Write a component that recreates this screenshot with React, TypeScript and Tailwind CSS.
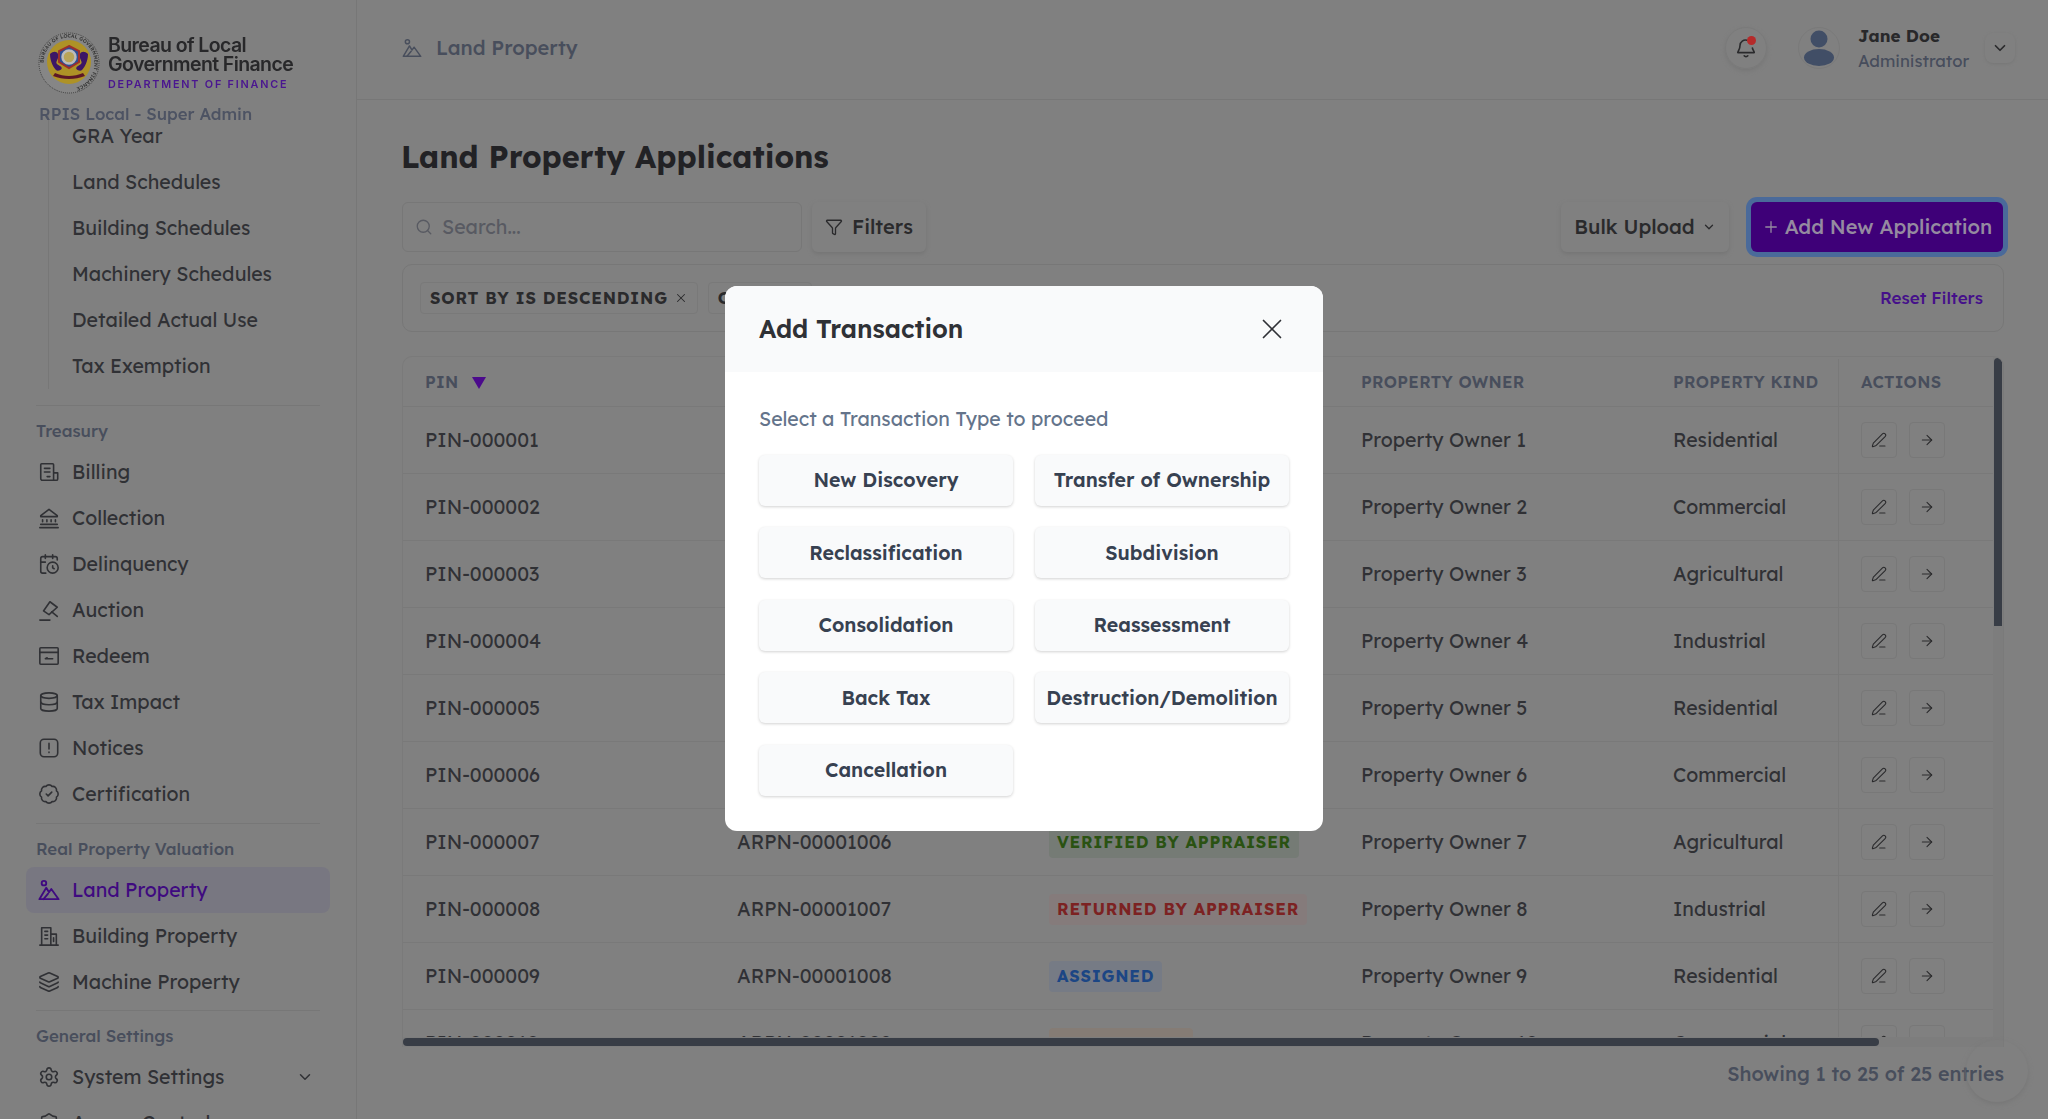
import React from 'react';
import { ArrowRight, CalendarClock, ChevronDown, Database, Filter, Layers, PenLine, Plus, Search, Settings, X, BadgeCheck, ShieldCheck } from 'lucide-react';

type IconProps = { size?: number; strokeWidth?: number; className?: string };

function Svg({ size = 22, strokeWidth = 1.75, className = '', children }: IconProps & { children: React.ReactNode }) {
  return (
    <svg width={size} height={size} viewBox="0 0 24 24" fill="none" stroke="currentColor" strokeWidth={strokeWidth} strokeLinecap="round" strokeLinejoin="round" className={`shrink-0 ${className}`}>
      {children}
    </svg>
  );
}

const BillingIcon = (p: IconProps) => (
  <Svg {...p}>
    <path d="M17 21H4a2 2 0 0 1-1-2V4a1 1 0 0 1 1-1h12a1 1 0 0 1 1 1v17h3a1.5 1.5 0 0 0 1.5-1.5V13H17" />
    <path d="M7 8h6M7 12h6M10 17h3" />
  </Svg>
);
const CollectionIcon = (p: IconProps) => (
  <Svg {...p}>
    <path d="M2 22.5h20M3 19h18" />
    <path d="M3 9.5 12 2.5l9 7v1H3Z" />
    <path d="M5 14v2M9.7 14v2M14.3 14v2M19 14v2" />
  </Svg>
);
const AuctionIcon = (p: IconProps) => (
  <Svg {...p}>
    <path d="M2 23h11" />
    <path d="m6 13 7-10 8 6-9 8Z" />
    <path d="m15 14 6 5" />
  </Svg>
);
const RedeemIcon = (p: IconProps) => (
  <Svg {...p}>
    <rect x="2" y="3" width="20" height="18" rx="1" />
    <path d="M2 8h20" />
    <path d="M8 15h8M10 14l-2 1" />
  </Svg>
);
const NoticesIcon = (p: IconProps) => (
  <Svg {...p}>
    <rect x="2.5" y="2.5" width="19" height="19" rx="4" />
    <path d="M12 7v6M12 16.5v.5" />
  </Svg>
);
const BuildingIcon = (p: IconProps) => (
  <Svg {...p}>
    <path d="M2 22h20" />
    <path d="M4 22V3h10v19M14 10h6v12" />
    <path d="M7.5 7h3M7.5 11h3M7.5 15h3M17 14v4" />
  </Svg>
);
const BellDotIcon = (p: IconProps) => (
  <Svg {...p}>
    <path d="M13 3.5a6 6 0 0 0-7.5 5.5c0 5-2.500 6.500-2.500 8h18c0-1.500-1.500-2.500-2-5" />
    <path d="M10 20.500c1 1.200 3 1.200 4 0" />
  </Svg>
);
const LandIcon = (p: IconProps) => (
  <Svg {...p} strokeWidth={p.strokeWidth ?? 2}>
    <circle cx="6.5" cy="4.500" r="2.500" />
    <path d="M1.500 22 9 9.500l3 5 2.500-3.500L22.500 22Z" />
    <path d="M6 22l5-6" />
  </Svg>
);

const subItems = ['GRA Year', 'Land Schedules', 'Building Schedules', 'Machinery Schedules', 'Detailed Actual Use', 'Tax Exemption'];

const treasury = [
  { label: 'Billing', icon: BillingIcon },
  { label: 'Collection', icon: CollectionIcon },
  { label: 'Delinquency', icon: CalendarClock },
  { label: 'Auction', icon: AuctionIcon },
  { label: 'Redeem', icon: RedeemIcon },
  { label: 'Tax Impact', icon: Database },
  { label: 'Notices', icon: NoticesIcon },
  { label: 'Certification', icon: BadgeCheck },
];

const kinds = ['Residential', 'Commercial', 'Agricultural', 'Industrial'];

const statuses: Record<number, { label: string; cls: string }> = {
  6: { label: 'VERIFIED BY APPRAISER', cls: 'bg-[#757b75] text-[#2a5212]' },
  7: { label: 'RETURNED BY APPRAISER', cls: 'bg-[#857b7b] text-[#7c2222]' },
  8: { label: 'ASSIGNED', cls: 'bg-[#767b85] text-[#1c4684]' },
  9: { label: 'IN PROGRESS', cls: 'bg-[#857c75] text-[#8c420e]' },
};

const transactions = [
  'New Discovery', 'Transfer of Ownership', 'Reclassification', 'Subdivision', 'Consolidation',
  'Reassessment', 'Back Tax', 'Destruction/Demolition', 'Cancellation',
];

function SectionTitle({ children }: { children: React.ReactNode }) {
  return <div className="h-[26px] shrink-0 pl-[36px] text-[16.800px] leading-[26px] font-medium text-[#484e5c]">{children}</div>;
}

function NavRow({ label, icon: Icon }: { label: string; icon: React.ElementType }) {
  return (
    <div className="flex h-[46px] shrink-0 items-center gap-[12px] pl-[38px] text-[19.500px] text-[#303135]">
      <Icon size={22} strokeWidth={1.75} className="shrink-0" />
      <span>{label}</span>
    </div>
  );
}

function Seal() {
  return (
    <svg width="62" height="62" viewBox="0 0 62 62" className="shrink-0">
      <circle cx="31" cy="31" r="30" fill="#868686" stroke="#3c3c3c" strokeDasharray="1 1" />
      <defs>
        <path id="seal-ring" d="M31 31m-25.500 0a25.500 25.500 0 1 1 51 0a25.500 25.500 0 1 1-51 0" />
      </defs>
      <text fontSize="5" fill="#333333" fontWeight="600">
        <textPath href="#seal-ring">BUREAU OF LOCAL GOVERNMENT FINANCE</textPath>
      </text>
      <circle cx="31" cy="30" r="22" fill="#ae9226" />
      <path d="M12 22c5-5 10-1 8 4s-3 5 2 8-2 6-4 4-6-8-6-16ZM50 22c-5-5-10-1-8 4s3 5-2 8 2 6 4 4 6-8 6-16Z" fill="#3c1666" />
      <path d="M31 14l10 5v11l-10 6-10-6V19Z" fill="#2c4d94" stroke="#9b2f2c" strokeWidth="2" />
      <circle cx="31" cy="25" r="6.500" fill="#b8a457" stroke="#bbbbbb" strokeWidth="2.500" />
      <path d="M17 41c9 4 19 4 28 0l2 3c-10 4-22 4-32 0Z" fill="#5c1726" />
    </svg>
  );
}

function Sidebar() {
  return (
    <aside className="flex h-full w-[357px] shrink-0 flex-col overflow-hidden border-r border-[#777777]">
      <div className="relative z-10 shrink-0 pl-[38px] pt-[32px]">
        <div className="flex items-center gap-[8px]">
          <Seal />
          <div>
            <div className="font-['Inter',sans-serif] text-[19.500px] leading-[19.500px] font-semibold tracking-[-0.6px] text-[#28282a]">
              Bureau of Local<br />Government Finance
            </div>
            <div className="mt-[4px] font-['Inter',sans-serif] text-[10.800px] leading-[12px] font-semibold tracking-[1.800px] text-[#4a1590]">DEPARTMENT OF FINANCE</div>
          </div>
        </div>
        <div className="ml-[1px] mt-[9px] h-[22px] text-[16.700px] leading-[22px] font-medium text-[#4d5363]">RPIS Local - Super Admin</div>
      </div>

      <div className="ml-[48px] -mt-[12px] shrink-0 border-l border-[#777777] pl-[23px]">
        {subItems.map((s) => (
          <div key={s} className="flex h-[46px] items-center text-[19.500px] leading-[20px] text-[#303135]">{s}</div>
        ))}
      </div>

      <div className="mx-[36px] mt-[16px] shrink-0 border-t border-[#777777]" />
      <div className="mt-[12px] shrink-0"><SectionTitle>Treasury</SectionTitle></div>
      <div className="mt-[5px] shrink-0">{treasury.map((t) => <NavRow key={t.label} label={t.label} icon={t.icon} />)}</div>
      <div className="mx-[36px] mt-[6px] shrink-0 border-t border-[#777777]" />
      <div className="mt-[12px] shrink-0"><SectionTitle>Real Property Valuation</SectionTitle></div>
      <div className="mx-[26px] mt-[5px] flex h-[46px] shrink-0 items-center gap-[12px] rounded-[8px] bg-[#787781] pl-[12px] text-[19.500px] text-[#3f0a80]">
        <LandIcon />
        <span>Land Property</span>
      </div>
      <NavRow label="Building Property" icon={BuildingIcon} />
      <NavRow label="Machine Property" icon={Layers} />
      <div className="mx-[36px] mt-[5px] shrink-0 border-t border-[#777777]" />
      <div className="mt-[12px] shrink-0"><SectionTitle>General Settings</SectionTitle></div>
      <div className="mt-[5px] flex h-[46px] shrink-0 items-center pr-[42px]">
        <div className="flex-1"><NavRow label="System Settings" icon={Settings} /></div>
        <ChevronDown size={18} className="text-[#303135]" />
      </div>
      <NavRow label="Access Control" icon={ShieldCheck} />
    </aside>
  );
}

function Header() {
  return (
    <header className="flex h-[100px] shrink-0 items-center justify-between border-b border-[#777777] pb-[4px] pl-[45px] pr-[33px]">
      <div className="flex items-center gap-[14px] text-[20px] font-medium text-[#484e5c]">
        <LandIcon size={20} strokeWidth={1.75} />
        <span>Land Property</span>
      </div>
      <div className="flex items-center">
        <div className="relative flex h-[42px] w-[42px] items-center justify-center rounded-full border border-[#7a7a7a] shadow-[0_2px_4px_#767676]">
          <BellDotIcon size={22} strokeWidth={1.75} className="text-[#2a2a2c]" />
          <span className="absolute left-[21px] top-[8px] h-[9px] w-[9px] rounded-full bg-[#b52a2a]" />
        </div>
        <div className="ml-[31px] flex h-[42px] w-[42px] items-center justify-center overflow-hidden rounded-full border border-[#7a7a7a]">
          <svg width="32" height="36" viewBox="0 0 32 36" fill="#414e66">
            <circle cx="16" cy="9" r="8.500" />
            <ellipse cx="16" cy="27.500" rx="15" ry="8.500" />
          </svg>
        </div>
        <div className="ml-[18px] w-[112px]">
          <div className="text-[17px] leading-[25px] font-bold text-[#28282a]">Jane Doe</div>
          <div className="text-[16.700px] leading-[25px] text-[#474d5c]">Administrator</div>
        </div>
        <div className="ml-[15px] flex h-[30px] w-[30px] items-center justify-center rounded-[8px] shadow-[0_1px_3px_#767676]">
          <ChevronDown size={18} strokeWidth={2.25} className="text-[#2a2a2c]" />
        </div>
      </div>
    </header>
  );
}

function Toolbar() {
  return (
    <div className="flex items-center justify-between">
      <div className="flex items-center gap-[10px]">
        <div className="flex h-[50px] w-[400px] items-center gap-[9px] rounded-[6px] border border-[#777777] pl-[12px] text-[19.500px] text-[#585a62]">
          <Search size={18} strokeWidth={1.75} />
          <span>Search...</span>
        </div>
        <div className="flex h-[50px] items-center gap-[9px] rounded-[6px] px-[13px] text-[20px] font-medium text-[#2a2a2c] shadow-[0_2px_4px_#747474]">
          <Filter size={18} strokeWidth={1.75} />
          <span>Filters</span>
        </div>
      </div>
      <div className="mr-[1px] flex items-center gap-[22px]">
        <div className="flex h-[50px] w-[168px] items-center justify-center gap-[7px] rounded-[6px] text-[20px] font-medium text-[#2a2a2c] shadow-[0_2px_4px_#747474]">
          <span>Bulk Upload</span>
          <ChevronDown size={14} strokeWidth={2.25} />
        </div>
        <div className="flex h-[50px] w-[252px] items-center justify-center gap-[5px] rounded-[6px] bg-[#3e0078] text-[20px] font-medium text-[#958aa0] ring-[5px] ring-[#4a6a9a]">
          <Plus size={18} strokeWidth={1.75} />
          <span>Add New Application</span>
        </div>
      </div>
    </div>
  );
}

function FilterChips() {
  return (
    <div className="mt-[12px] flex h-[68px] items-center justify-between rounded-[10px] border border-[#777777] pl-[17px] pr-[20px]">
      <div className="flex gap-[10px]">
        <div className="flex h-[32px] items-center gap-[6px] rounded-[4px] border border-[#797979] px-[9px] text-[16.500px] font-bold tracking-[0.8px] text-[#2a2a2c]">
          SORT BY IS DESCENDING
          <X size={14} strokeWidth={1.75} />
        </div>
        <div className="flex h-[32px] items-center rounded-[4px] border border-[#797979] px-[9px] text-[16.500px] font-bold tracking-[0.8px] text-[#2a2a2c]">CREATED</div>
      </div>
      <span className="text-[17px] font-medium text-[#45108a]">Reset Filters</span>
    </div>
  );
}

function Table() {
  const rows = Array.from({ length: 10 }, (_, i) => i);
  return (
    <div className="relative mt-[24px] h-[691px] overflow-hidden rounded-t-[10px] border-x border-t border-[#7a7a7a]">
      <div className="flex h-[50px] items-center border-b border-[#797979] pt-[2px] text-[16.500px] font-semibold tracking-[0.3px] text-[#484e5c]">
        <div className="flex w-[334px] items-center gap-[13px] pl-[22px]">
          PIN
          <span className="h-0 w-0 border-x-[7px] border-t-[12px] border-x-transparent border-t-[#4b0a8c]" />
        </div>
        <div className="w-[320px]">ARPN</div>
        <div className="w-[304px]">STATUS</div>
        <div className="w-[312px]">PROPERTY OWNER</div>
        <div className="w-[165px]">PROPERTY KIND</div>
        <div className="flex h-full items-center border-l border-[#797979] pl-[22px]">ACTIONS</div>
      </div>
      {rows.map((i) => {
        const status = statuses[i];
        return (
          <div key={i} className="flex h-[67px] items-center border-b border-[#797979] text-[19.500px] text-[#303135]">
            <div className="w-[334px] pl-[22px]">PIN-{String(i + 1).padStart(6, '0')}</div>
            <div className="w-[320px]">ARPN-{String(1000 + i).padStart(8, '0')}</div>
            <div className="w-[304px]">
              {status && (
                <span className={`-ml-[8px] inline-block rounded-[4px] px-[8px] py-[3px] text-[16.500px] font-bold tracking-[0.8px] ${status.cls}`}>{status.label}</span>
              )}
            </div>
            <div className="w-[312px]">Property Owner {i + 1}</div>
            <div className="w-[165px]">{kinds[i % 4]}</div>
            <div className="flex h-full items-center gap-[12px] border-l border-[#797979] pl-[22px] text-[#2a2a2c]">
              <span className="flex h-[36px] w-[36px] items-center justify-center rounded-[4px] border border-[#787878]"><PenLine size={16} strokeWidth={1.6} /></span>
              <span className="flex h-[36px] w-[36px] items-center justify-center rounded-[4px] border border-[#787878]"><ArrowRight size={16} strokeWidth={1.6} /></span>
            </div>
          </div>
        );
      })}
      {/* scrollbar tracks and thumbs */}
      <div className="absolute bottom-0 right-0 top-0 w-[10px] bg-[#7d7d7d]" />
      <div className="absolute bottom-0 left-0 right-0 h-[10px] bg-[#7d7d7d]" />
      <div className="absolute right-[1px] top-[1px] h-[268px] w-[8px] rounded-t-full bg-[#383d46]" />
      <div className="absolute bottom-[1px] left-0 h-[8px] w-[1476px] rounded-full bg-[#383d46]" />
    </div>
  );
}

function TransactionModal() {
  return (
    <div className="fixed inset-0 flex items-center justify-center pb-[3px]">
      <div className="w-[598px] overflow-hidden rounded-[12px] bg-white">
        <div className="flex h-[86px] items-center justify-between bg-[#f9fafb] pl-[34px] pr-[34px]">
          <h2 className="text-[25px] font-semibold text-[#2f3136]">Add Transaction</h2>
          <X size={34} strokeWidth={1.2} className="text-[#2f3136]" />
        </div>
        <div className="px-[34px] pb-[35px] pt-[33px]">
          <p className="text-[19.500px] leading-[28px] text-[#64748b]">Select a Transaction Type to proceed</p>
          <div className="mt-[22px] grid grid-cols-2 gap-x-[22px] gap-y-[21.500px]">
            {transactions.map((t) => (
              <div key={t} className="flex h-[51px] items-center justify-center rounded-[6px] bg-[#f9fafb] text-[19.500px] font-semibold text-[#374151] shadow-[0_1px_3px_rgba(0,0,0,0.18)]">{t}</div>
            ))}
          </div>
        </div>
      </div>
    </div>
  );
}

export default function App() {
  return (
    <div className="flex h-[1119px] w-[2048px] overflow-hidden bg-[#808080] font-['Lexend','Open_Sans','Noto_Sans',sans-serif]">
      <Sidebar />
      <div className="relative flex min-w-0 flex-1 flex-col">
        <Header />
        <main className="flex-1 pl-[45px] pr-[44px]">
          <h1 className="-ml-[1px] mt-[36px] h-[42px] text-[30.600px] leading-[42px] font-bold text-[#222225]">Land Property Applications</h1>
          <div className="mt-[24px]"><Toolbar /></div>
          <FilterChips />
          <Table />
          <div className="mt-[12px] text-right text-[19.600px] font-medium text-[#484e5c]">Showing 1 to 25 of 25 entries</div>
        </main>
        <div className="absolute bottom-[17px] right-[20px] h-[62px] w-[62px] rounded-full shadow-[0_2px_5px_#767676]" />
      </div>
      <TransactionModal />
    </div>
  );
}
